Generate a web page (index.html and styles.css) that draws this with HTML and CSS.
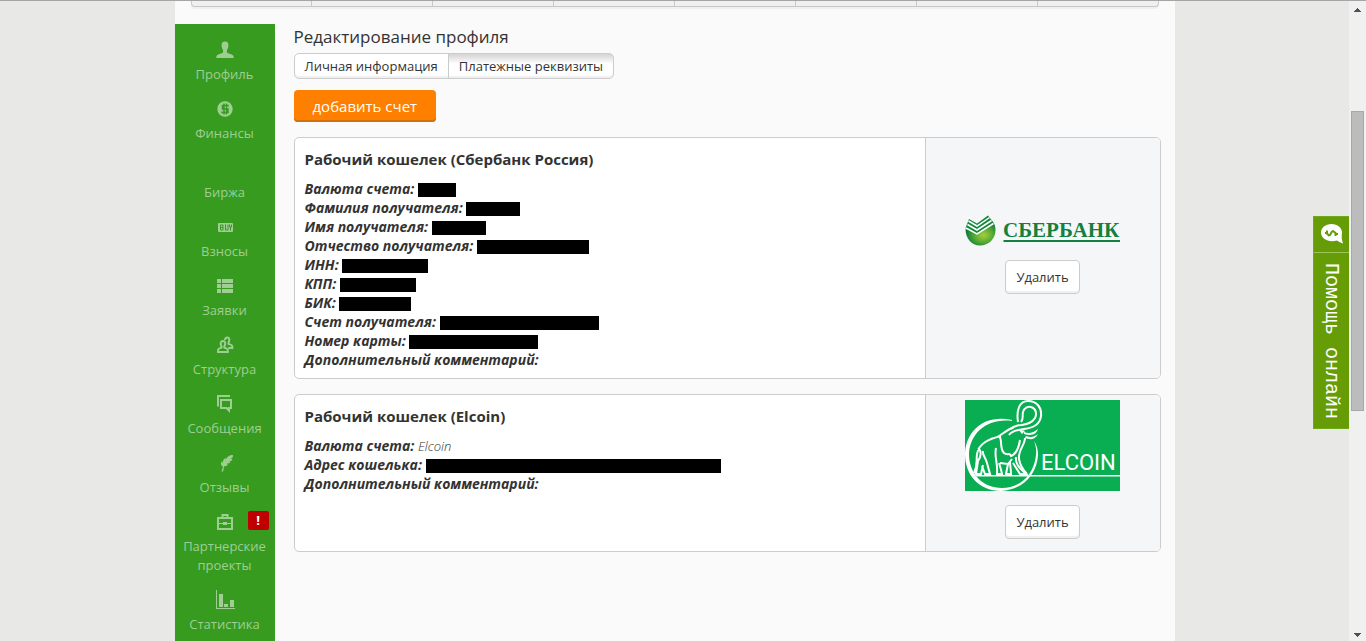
FILE: index.html
```html
<!DOCTYPE html>
<html lang="ru">
<head>
  <meta charset="UTF-8">
  <meta name="viewport" content="width=device-width, initial-scale=1.0">
  <title>Редактирование профиля</title>
  <link rel="stylesheet" href="styles.css">
</head>
<body>

<div class="page">
  <div class="topmenu">
    <span></span><span></span><span></span><span></span><span></span><span></span><span></span><span></span>
  </div>

  <div class="columns">
    <nav class="sidebar">
      <a href="#">
        <svg width="18" height="18" viewBox="0 0 18 18"><path d="M9 0.500c2.500 0 3.600 1.600 3.400 4.200-.1 2-.8 3.400-1.500 4.300v2.500c.8 1 5.600 1.800 6.400 3.300.3.600.4 1.500.4 2.200H.3c0-.7.1-1.600.4-2.200.8-1.500 5.600-2.300 6.400-3.300V9c-.7-.9-1.400-2.300-1.500-4.300C5.400 2.100 6.500.5 9 .5z"/></svg>
        <span>Профиль</span>
      </a>
      <a href="#">
        <svg width="18" height="18" viewBox="0 0 18 18"><circle cx="9" cy="9" r="7.700"/><path class="cut dollar-sign" d="M12 6.500V5.500H6.500V9H12v3.500H6v-1M8 3.500v11M10.500 3.500v11"/></svg>
        <span>Финансы</span>
      </a>
      <a href="#">
        <svg width="18" height="18" viewBox="0 0 18 18"></svg>
        <span>Биржа</span>
      </a>
      <a href="#">
        <svg width="18" height="18" viewBox="0 0 18 18"><rect x="2" y="5" width="15" height="9" rx="1"/><path class="cut" d="M4.500 7v5h2.500V7zM4.500 9.500H7M9.500 6.500V12H12V6.500M13.500 6.500v2.500h2V6.500M14.500 9v3.500"/></svg>
        <span>Взносы</span>
      </a>
      <a href="#">
        <svg width="18" height="18" viewBox="0 0 18 18"><path d="M1 2h4v4H1zM6 2h11v4H6zM1 7h4v4H1zM6 7h11v4H6zM1 12h4v4H1zM6 12h11v4H6z"/></svg>
        <span>Заявки</span>
      </a>
      <a href="#">
        <svg width="18" height="18" viewBox="0 0 18 18"><path class="line" d="M7 5c1.600 0 2.300 1.200 2.200 2.800C9.100 9 8.700 9.800 8.300 10.300v1.200c1.500.8 3.500 1 3.500 2.500v2H2v-2c0-1.500 2-1.700 3.500-2.500v-1.200C5 9.800 4.700 9 4.700 7.800 4.600 6.200 5.400 5 7 5zM9 4c.1-1.800.9-2.600 2.200-2.600 1.600 0 2.300 1.200 2.100 3-.1 1-.4 1.600-.8 2.200v1.200c1.500.8 3.800 1 3.800 2.400v1.800h-4"/></svg>
        <span>Структура</span>
      </a>
      <a href="#">
        <svg width="18" height="18" viewBox="0 0 18 18"><path class="line" d="M2 11.500V1h12M5 5h10v8h-2v2.500L10.500 13H5z"/></svg>
        <span>Сообщения</span>
      </a>
      <a href="#">
        <svg width="18" height="18" viewBox="0 0 18 18"><path d="M5.500 17.500 7 12.500c-2-.5-2.500-3-1.700-5 .8.500 1.300 1 1.500 2C6.500 6.500 8 4.500 9.500 4c.3.800.3 1.300.1 2C10.500 3 13 1 17 1c.3 2-.8 3.300-2.500 4 1 0 1.500.1 2 .5-1 1.500-2.300 2-4 2 .8.100 1.400.400 1.900 1-1.300 1.100-2.500 1.200-3.900.9.600.300 1 .800 1.200 1.500-1.100 1-2.400 1.400-3.600 1.300l-1 5.300z"/></svg>
        <span>Отзывы</span>
      </a>
      <a href="#">
        <svg width="18" height="18" viewBox="0 0 18 18"><path class="line" d="M2 5h14v11H2zM6.500 4V2h5V4"/><path d="M2 10h5V9h4v1h5v1h-5v1H7v-1H2z"/></svg>
        <span>Партнерские проекты</span>
        <b class="badge">!</b>
      </a>
      <a href="#">
        <svg width="20" height="20" viewBox="0 0 20 20"><path d="M1 0h1v18h18v1H1zM4 4h4v13H4zM9 14h4v3H9zM15 10h4v7h-4z"/></svg>
        <span>Статистика</span>
      </a>
    </nav>

    <main class="content">
      <h1>Редактирование профиля</h1>

      <div class="tabs">
        <button type="button">Личная информация</button>
        <button type="button" class="active">Платежные реквизиты</button>
      </div>

      <button type="button" class="add">добавить счет</button>

      <section class="wallet">
        <div class="info">
          <h2>Рабочий кошелек (Сбербанк Россия)</h2>
          <ul>
            <li><b>Валюта счета:</b> <span class="hidden w38"></span></li>
            <li><b>Фамилия получателя:</b> <span class="hidden w54"></span></li>
            <li><b>Имя получателя:</b> <span class="hidden w54"></span></li>
            <li><b>Отчество получателя:</b> <span class="hidden w112"></span></li>
            <li><b>ИНН:</b> <span class="hidden w86"></span></li>
            <li><b>КПП:</b> <span class="hidden w76"></span></li>
            <li><b>БИК:</b> <span class="hidden w72"></span></li>
            <li><b>Счет получателя:</b> <span class="hidden w159"></span></li>
            <li><b>Номер карты:</b> <span class="hidden w129"></span></li>
            <li><b>Дополнительный комментарий:</b></li>
          </ul>
        </div>
        <div class="side">
          <svg width="155" height="31" viewBox="0 0 155 31" role="img" aria-label="Сбербанк">
            <defs>
              <radialGradient id="ball" cx="60%" cy="55%" r="60%">
                <stop offset="0" stop-color="#a5cf3c"/>
                <stop offset="0.500" stop-color="#5bab35"/>
                <stop offset="1" stop-color="#0a7a3a"/>
              </radialGradient>
            </defs>
            <path fill="url(#ball)" d="M0.500 14c0 9 6 16.500 14.500 16.500S30.500 24 30.500 15c0-3-.7-5-2-7.500L12 16z"/>
            <path fill="#148a3c" d="M4 4 12 8.500 23 0.500l5.500 7L12 19 0.500 13z"/>
            <path class="stripe" d="M3.500 6l8.500 5L24.500 2.500M2.500 9.500l9.500 5.500L26.500 5.500M1 13l11 6L28.500 8.500"/>
            <text class="sber" x="38" y="22">СБЕРБАНК</text>
            <path fill="#14803f" d="M38.500 25H155v2H38.500z"/>
          </svg>
          <button type="button">Удалить</button>
        </div>
      </section>

      <section class="wallet">
        <div class="info">
          <h2>Рабочий кошелек (Elcoin)</h2>
          <ul>
            <li><b>Валюта счета:</b> <span class="value">Elcoin</span></li>
            <li><b>Адрес кошелька:</b> <span class="hidden w295"></span></li>
            <li><b>Дополнительный комментарий:</b></li>
          </ul>
        </div>
        <div class="side">
          <svg width="155" height="91" viewBox="0 0 155 91" role="img" aria-label="Elcoin">
            <rect width="155" height="91" fill="#0aae52"/>
            <!-- ring and ground line -->
            <path fill="#fff" d="M47 20C20 14 1 30 0 54c0 22 15 37 36 37 21-1 36-16 37-36 0-5-1-10-4-14 2 5 2.500 9 2 14-2 20-16 33-34 33C18 88 4 74 4 54 5 33 22 18 47 21z"/>
            <path fill="#fff" d="M11 75h144v1.500H11z"/>
            <!-- trunk -->
            <path class="trunk" d="M53 22c-2-13 2-21 10-21 9 0 14 7 13 15-1 9-8 12-17 13-8 1-13 3-15 6"/>
            <path class="trunk" d="M56 22c3-3 1-7 2-10 1-4 5-6 8-5 5 1 6 7 4 11-3 5-8 6-13 7-5 0-8 1-11 4"/>
            <!-- head, ear and tusks -->
            <path fill="#fff" d="M53 29l7 2-3 3zM59 32c5 2 9 1 14-3-2 6-7 7-14 5zM61 36c5 2 8 1 12-2-3 6-8 6-13 4z"/>
            <path class="body" d="M49 27c-5 2-9 5-15 9 4 4 0 12 5 17 4 3 5-1 7 3 5-2 8-9 9-16M60 38c0 7-7 12-6 21 1 6 4 11 8 15"/>
            <!-- back and legs -->
            <path class="body" d="M36 36C24 39 14 43 12 54c-1 8 1 10-3 19M13 48c4 3 3 9 0 13l-2 13h5l2-9M18 51c-1 4 3 7 4 12l3 11h-5l-3-8M31 48c-2 9 2 14 1 26h5c-1-5-2-8-3-11M35 63l8 1 4-5M45 61c0 5 1 8 1 13h-5l2-10M51 57c-1 8 5 12 10 17h-6l-7-11"/>
            <text class="elcoin" x="76" y="70">ELCOIN</text>
          </svg>
          <button type="button">Удалить</button>
        </div>
      </section>
    </main>
  </div>
</div>

<button type="button" class="help">
  <span class="help-icon">
    <svg width="24" height="24" viewBox="0 0 24 24"><path fill="#fff" d="M11.500 2C17.500 2 22 5.800 22 10.500c0 3.500-1 4.500 1 11-3-1-4.500-2-6-3C9 21 1 17 1 10.500 1 5.800 5.500 2 11.500 2z"/><path class="dollar" d="M7 8.500v3l2 2c2 0 2-4.500 4-4.500l2.500 2v3M5 11h2M15.500 12h2.500"/></svg>
  </span>
  <span class="help-text">Помощь онлайн</span>
</button>

<div class="scrollbar">
  <svg width="7" height="4" viewBox="0 0 7 4"><path d="M3 0h1v1h1v1h1v1h1v1H0V3h1V2h1V1h1z"/></svg>
  <div class="track"><div class="thumb"></div></div>
  <svg width="7" height="4" viewBox="0 0 7 4"><path d="M0 0h7v1H6v1H5v1H4v1H3V3H2V2H1V1H0z"/></svg>
</div>

</body>
</html>
```
FILE: styles.css
```css
* {
  box-sizing: border-box;
}

body {
  margin: 0;
  padding-right: 17px;
  height: 100vh;
  overflow: hidden;
  border-top: 1px solid #a5a5a5;
  background: #e8e8e6;
  color: #333;
  font-family: "Open Sans", "Noto Sans", sans-serif;
  font-size: 13px;
  line-height: 19px;
}

button {
  font: inherit;
  color: inherit;
  cursor: pointer;
}

.page {
  max-width: 1000px;
  min-height: 100vh;
  margin: 0 auto;
  background: #fafafa;
}

/* bottom edge of the main menu */
.topmenu {
  display: flex;
  height: 6px;
  margin: 0 16px 17px;
  border: 1px solid #c8c8c8;
  border-top: 0;
  border-radius: 0 0 4px 4px;
  background: #f0f0f0;
  box-shadow: 0 2px 0 #f0f0f0;
}

.topmenu span {
  flex: 1;
  border-right: 1px solid #c8c8c8;
}

.topmenu span:last-child {
  border-right: 0;
}

.columns {
  display: flex;
  gap: 19px;
  padding-right: 14px;
}

.sidebar {
  flex: 0 0 100px;
  min-height: 100vh;
  padding-top: 6px;
  background: #379b20;
}

.sidebar a {
  position: relative;
  display: flex;
  flex-direction: column;
  align-items: center;
  padding: 8px 4px 5px;
  color: #9fce93;
  text-align: center;
  text-decoration: none;
}

.sidebar svg {
  height: 24px;
  margin-bottom: 3px;
  fill: #9fce93;
}

.sidebar .cut {
  fill: none;
  stroke: #379b20;
  stroke-width: 1;
}

.sidebar .dollar-sign {
  stroke-width: 1.500;
}

.sidebar .line {
  fill: none;
  stroke: #9fce93;
  stroke-width: 2;
}

.badge {
  position: absolute;
  top: 9px;
  right: 6px;
  width: 21px;
  border-radius: 2px;
  background: #c00000;
  color: #fff;
}

.content {
  flex: 1;
  min-width: 0;
}

h1 {
  margin: 0 0 4px;
  font-size: 17px;
  font-weight: normal;
  line-height: 25px;
}

.tabs {
  display: flex;
  margin-bottom: 11px;
}

.tabs button {
  height: 26px;
  padding: 0 10px;
  border: 1px solid #ccc;
  border-radius: 5px 0 0 5px;
  background: #fff;
  box-shadow: inset 0 -2px 1px #f0f0f0;
}

.tabs .active {
  margin-left: -1px;
  border-radius: 0 5px 5px 0;
  background: linear-gradient(#d4d4d4, #fff 10px);
}

.add {
  display: block;
  height: 32px;
  margin-bottom: 15px;
  padding: 0 19px;
  border: 0;
  border-radius: 4px;
  background: #ff8000;
  box-shadow: inset 0 -2px 0 #d0700f;
  color: #fff;
  font-size: 15px;
}

.wallet {
  display: flex;
  margin-bottom: 15px;
  border: 1px solid #ccc;
  border-radius: 5px;
  background: #fff;
  overflow: hidden;
}

.info {
  flex: 1;
  padding: 10px 10px 9px;
}

h2 {
  margin: 0 0 8px;
  font-size: 15px;
  line-height: 23px;
}

.info ul {
  margin: 0;
  padding: 0;
  list-style: none;
  font-size: 14px;
  font-style: italic;
}

.info li {
  height: 19px;
}

.value {
  font-size: 13px;
  font-weight: 300;
}

.hidden {
  display: inline-block;
  height: 14px;
  background: #000;
  vertical-align: -3px;
}

.w38 { width: 38px; }
.w54 { width: 54px; }
.w72 { width: 72px; }
.w76 { width: 76px; }
.w86 { width: 86px; }
.w112 { width: 112px; }
.w129 { width: 129px; }
.w159 { width: 159px; }
.w295 { width: 295px; }

.side {
  flex: 0 0 235px;
  display: flex;
  flex-direction: column;
  align-items: center;
  justify-content: center;
  gap: 14px;
  padding: 5px 0 12px;
  border-left: 1px solid #ccc;
  background: #f4f6f8;
}

.side button {
  height: 34px;
  padding: 0 10px;
  border: 1px solid #ccc;
  border-radius: 4px;
  background: #fff;
  box-shadow: inset 0 -2px 1px #f0f0f0;
}

.stripe {
  fill: none;
  stroke: #fff;
  stroke-width: 1.500;
}

.sber {
  fill: #14803f;
  font: bold 21px "Liberation Serif", serif;
}

.trunk,
.body {
  fill: none;
  stroke: #fff;
  stroke-width: 2;
}

.elcoin {
  fill: #fff;
  font: 22px Roboto, sans-serif;
}

/* online help tab */
.help {
  position: fixed;
  top: 216px;
  right: 17px;
  display: flex;
  flex-direction: column;
  align-items: center;
  width: 36px;
  height: 213px;
  padding: 0;
  border: 1px solid #6fa91c;
  border-right: 0;
  background: #669c06;
  color: #fff;
}

.help-icon {
  width: 100%;
  height: 36px;
  padding-top: 5px;
  border-bottom: 1px solid #9dc35c;
}

.help-text {
  padding-top: 10px;
  font-family: "Liberation Mono", monospace;
  font-size: 20px;
  writing-mode: vertical-rl;
}

.dollar {
  fill: none;
  stroke: #669c06;
  stroke-width: 2;
}

.scrollbar {
  position: fixed;
  top: 1px;
  right: 0;
  bottom: 0;
  display: flex;
  flex-direction: column;
  align-items: center;
  width: 17px;
  padding: 7px 0 4px;
  background: #f0f0f0;
  fill: #505050;
}

.track {
  flex: 1;
  padding-top: 99px;
}

.thumb {
  width: 13px;
  height: 300px;
  border: 1px solid #a8a8a8;
  background: #bcbcbc;
}
```
